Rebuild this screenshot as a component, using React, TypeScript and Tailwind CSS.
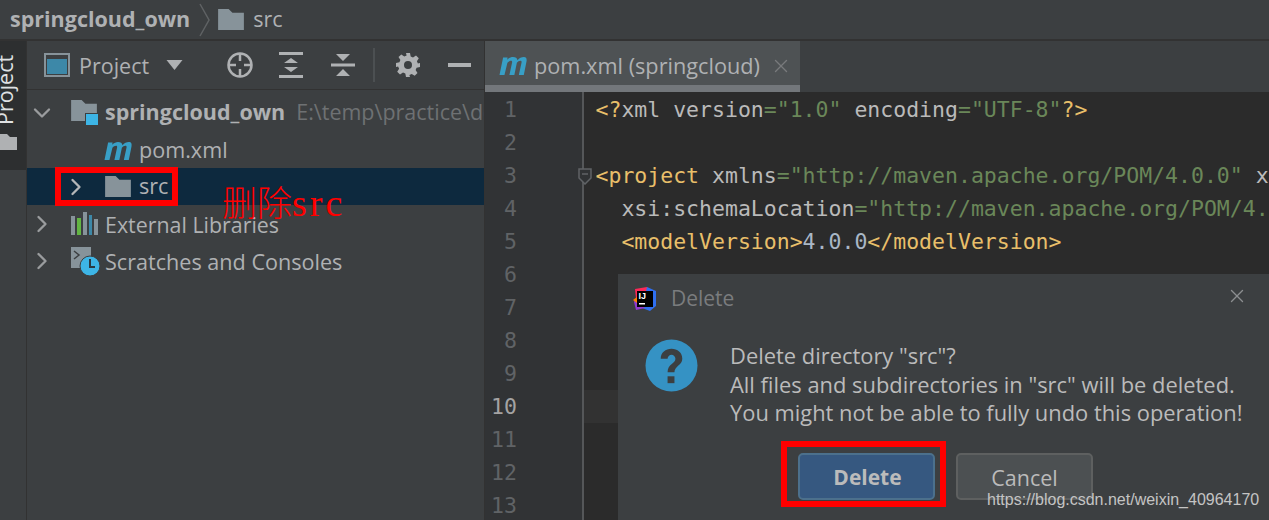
import { ChevronDown, ChevronRight, X } from "lucide-react";

const uiFont = "font-['Open_Sans','Noto_Sans',sans-serif]";

function Folder({ className }: { className?: string }) {
  return (
    <svg viewBox="0 0 27 22" className={`shrink-0 ${className}`}>
      <path d="M0 0h11l4 4h12v18H0z" fill="#87939a" />
    </svg>
  );
}

function MavenIcon({ className }: { className?: string }) {
  return (
    <svg viewBox="0 0 30 20" className={`shrink-0 w-[28px] h-[18px] ${className}`} fill="#389fc6">
      <path d="M0 20L4 .5h5l-.5 2.500C10.500 1 13 0 15 0c3 0 4.500 1 5 3.500C22 1.200 24.500 0 27 0c3 0 3.500 2 3 5l-3 15h-5.500l3-14c.2-1.200-.2-1.800-1.200-1.800-1.500 0-3 1-4 2.300L16.500 20H11l3-14c.2-1.200-.2-1.800-1.200-1.800-1.500 0-3 1-4 2.300L5.500 20z" />
    </svg>
  );
}

function Toolbar() {
  return (
    <div className="h-[49px] shrink-0 flex items-center border-b border-[#323232] pl-[17px]">
      <svg viewBox="0 0 26 24" className="w-[26px] h-[24px]">
        <rect x="1" y="1" width="24" height="22" fill="#3c3f41" stroke="#87939a" strokeWidth="2" />
        <rect x="3" y="6" width="20" height="15" fill="#3d88a8" />
      </svg>
      <span className="ml-[9px] mt-[2px] text-[21.500px] text-[#afb1b3] leading-none w-[87px]">Project</span>
      <svg viewBox="0 0 16 10" className="w-[17px] h-[10px]">
        <path d="M0 0h16L8 10z" fill="#afb1b3" />
      </svg>
      <svg viewBox="0 0 26 26" className="ml-[44px] w-[26px] h-[26px]" fill="none" stroke="#afb1b3" strokeWidth="2.500">
        <circle cx="13" cy="13" r="11.500" />
        <path d="M13 1v8M13 17v8M1 13h8M17 13h8" />
      </svg>
      <svg viewBox="0 0 24 26" className="ml-[26px] w-[24px] h-[26px]" fill="#afb1b3">
        <path d="M0 0h24v3H0zM0 23h24v3H0zM12 6l7 5H5zM12 20l-7-5h14z" />
      </svg>
      <svg viewBox="0 0 24 26" className="ml-[28px] w-[24px] h-[26px]" fill="#afb1b3">
        <path d="M0 11.500h24v3H0zM12 9L5 2h14zM12 17l7 7H5z" />
      </svg>
      <div className="ml-[18px] w-[2px] h-[34px] bg-[#4c5052]" />
      <svg viewBox="0 0 24 24" className="ml-[21px] w-[24px] h-[24px]" fill="#afb1b3">
        <path
          fillRule="evenodd"
          d="M10 0h4l.7 3.400 2.300 1 3-1.900 2.800 2.800-1.900 3 1 2.300L24 10v4l-3.400.7-1 2.300 1.900 3-2.800 2.800-3-1.900-2.300 1L14 24h-4l-.7-3.400-2.300-1-3 1.900-2.800-2.800 1.900-3-1-2.300L0 14v-4l3.400-.7 1-2.300-1.900-3L5.300 1.500l3 1.900 2.300-1zM12 8a4 4 0 1 0 0 8 4 4 0 0 0 0-8z"
        />
      </svg>
      <div className="ml-[28px] w-[23px] h-[4px] bg-[#afb1b3]" />
    </div>
  );
}

function ProjectTree() {
  return (
    <div className={`w-[458px] shrink-0 overflow-hidden bg-[#3c3f41] border-r border-[#323232] ${uiFont}`}>
      <Toolbar />
      <div className="pt-[4px] text-[21.600px] text-[#afb1b3]">
        <div className="h-[37px] flex items-center whitespace-nowrap">
          <ChevronDown className="shrink-0 ml-[1px] w-[28px] h-[28px] text-[#9a9c9e]" strokeWidth={2} />
          <div className="relative shrink-0 ml-[15px] w-[27px] h-[25px]">
            <Folder className="w-[26px] h-[21px]" />
            <div className="absolute right-0 bottom-0 w-[13px] h-[12px] bg-[#3db5e6] border-l border-t border-[#3c3f41]" />
          </div>
          <span className="ml-[7px] font-bold text-[21.500px]">springcloud_own</span>
          <span className="ml-[11px] text-[#6e7173] text-[21.500px]">E:\temp\practice\demo</span>
        </div>
        <div className="h-[37px] flex items-center pl-[77px] pt-[2px]">
          <MavenIcon />
          <span className="ml-[7px]">pom.xml</span>
        </div>
        <div className="h-[37px] flex items-center bg-[#0d293e] pl-[35px]">
          <ChevronRight className="w-[28px] h-[28px] text-[#b4b6b8]" strokeWidth={2} />
          <Folder className="ml-[15px] w-[26px] h-[21px]" />
          <span className="ml-[8px]">src</span>
        </div>
        <div className="h-[37px] flex items-center pl-[1px] pt-[4px]">
          <ChevronRight className="w-[28px] h-[28px] text-[#9a9c9e] -mt-[4px]" strokeWidth={2} />
          <svg viewBox="0 0 27 23" className="ml-[15px] w-[27px] h-[23px] -mt-[4px]">
            <path d="M0 4h4v19H0z" fill="#87939a" />
            <path d="M6 6h4v17H6z" fill="#62b543" />
            <path d="M12 0h4v23h-4z" fill="#87939a" />
            <path d="M18 3h3v20h-3z" fill="#3d88a8" />
            <path d="M23 7h4v16h-4z" fill="#87939a" />
          </svg>
          <span className="ml-[7px] text-[21.400px]">External Libraries</span>
        </div>
        <div className="h-[37px] flex items-center pl-[1px] pt-[4px]">
          <ChevronRight className="w-[28px] h-[28px] text-[#9a9c9e] -mt-[4px]" strokeWidth={2} />
          <svg viewBox="0 0 29 29" className="ml-[15px] w-[29px] h-[29px] -mt-[2px]">
            <path d="M0 0h20v21H0z" fill="#87939a" />
            <path d="M3 4l5 4-5 4" fill="none" stroke="#3c3f41" strokeWidth="1.500" />
            <circle cx="19" cy="19" r="10" fill="#3db5e6" stroke="#3c3f41" strokeWidth="1" />
            <path d="M19 12v8h5" fill="none" stroke="#2b3a42" strokeWidth="2" />
          </svg>
          <span className="ml-[5px]">Scratches and Consoles</span>
        </div>
      </div>
    </div>
  );
}

const numbers = [1, 2, 3, 4, 5, 6, 7, 8, 9, 10, 11, 12, 13];

function CodeLine({ children }: { children?: React.ReactNode }) {
  return <div className="h-[33px] leading-[33px] whitespace-pre pl-[11.500px]">{children}</div>;
}

function Editor() {
  const tag = "text-[#e8bf6a]";
  const str = "text-[#6a8759]";
  return (
    <div className="flex-1 min-w-0 flex flex-col overflow-hidden">
      <div className="h-[51px] shrink-0 bg-[#3c3f41] flex">
        <div className={`relative w-[315px] bg-[#4e5254] flex items-center pt-[7px] pl-[14px] text-[21.700px] text-[#afb1b3] border-b-[7px] border-[#73777b] ${uiFont}`}>
          <MavenIcon className="-mt-[1px]" />
          <span className="ml-[7px] whitespace-nowrap">pom.xml (springcloud)</span>
          <X className="absolute right-[8px] top-[14px] w-[22px] h-[22px] text-[#787a7c]" strokeWidth={1.500} />
        </div>
      </div>
      <div className="flex-1 flex bg-[#2b2b2b] font-['DejaVu_Sans_Mono',monospace] text-[21.500px]">
        <div className="relative w-[99px] shrink-0 bg-[#313335] border-r-2 border-[#555759] pt-[1px] text-right pr-[65px] text-[#606366]">
          {numbers.map((n) => (
            <div key={n} className={`h-[33px] leading-[33px] ${n === 10 ? "text-[#a4a3a3]" : ""}`}>
              {n}
            </div>
          ))}
          <svg viewBox="0 0 14 17" className="absolute left-[93px] top-[76px] w-[14px] h-[17px]" fill="#313335" stroke="#606366" strokeWidth="1.500">
            <path d="M1 1h12v9l-6 6-6-6z" />
            <path d="M4 6h6" />
          </svg>
        </div>
        <div className="flex-1 min-w-0 pt-[1px] text-[#bababa] overflow-hidden">
          <CodeLine>
            <span className={tag}>&lt;?</span>xml version<span className={str}>="1.0"</span> encoding<span className={str}>="UTF-8"</span><span className={tag}>?&gt;</span>
          </CodeLine>
          <CodeLine />
          <CodeLine>
            <span className={tag}>&lt;project</span> xmlns<span className={str}>="http://maven.apache.org/POM/4.0.0"</span> xmlns
          </CodeLine>
          <CodeLine>
            {"  "}xsi:schemaLocation<span className={str}>="http://maven.apache.org/POM/4.0.0"</span>
          </CodeLine>
          <CodeLine>
            {"  "}<span className={tag}>&lt;modelVersion&gt;</span><span className="text-[#a9b7c6]">4.0.0</span><span className={tag}>&lt;/modelVersion&gt;</span>
          </CodeLine>
          <CodeLine />
          <CodeLine />
          <CodeLine />
          <CodeLine />
          <div className="h-[33px] bg-[#323232]" />
        </div>
      </div>
    </div>
  );
}

function IdeaLogo() {
  return (
    <svg viewBox="0 0 24 24" className="w-[24px] h-[24px]">
      <path d="M2 2l12-2 3 8L4 21z" fill="#fe2857" />
      <path d="M14 0l9 4v15l-6 5-8-3z" fill="#2f6ff0" />
      <path d="M2 12L1 15l2 8 9-2z" fill="#9039d0" />
      <path d="M0 13l4-3v6z" fill="#ff8100" />
      <rect x="4" y="4" width="16" height="16" fill="#000" />
      <text x="5.500" y="12" fontSize="9" fontWeight="700" fill="#fff" fontFamily="Liberation Sans">IJ</text>
      <rect x="6" y="16" width="6" height="1.500" fill="#fff" />
    </svg>
  );
}

function DeleteDialog() {
  return (
    <div className={`absolute left-[618px] top-[274px] w-[651px] h-[246px] bg-[#3c3f41] text-[#bbbbbb] ${uiFont}`}>
      <div className="h-[49px] flex items-center pl-[15px] text-[21px]">
        <IdeaLogo />
        <span className="ml-[14px] text-[#7a7c7e]">Delete</span>
        <X className="absolute right-[21px] top-[11px] w-[22px] h-[22px] text-[#8c8e90]" strokeWidth={1.500} />
      </div>
      <div className="flex pl-[27px] pt-[16px]">
        <svg viewBox="0 0 54 54" className="w-[53px] h-[53px] shrink-0">
          <circle cx="27" cy="27" r="26.500" fill="#3592c4" />
          <path d="M16 20c0-6 5-10 11-10s11 4 11 10c0 7-8 7-8 14h-7c0-9 8-9 8-14 0-2-2-4-4-4s-4 2-4 4z" fill="#3c3f41" />
          <rect x="23" y="38" width="7" height="7" fill="#3c3f41" />
        </svg>
        <div className="ml-[32px] mt-[3px] text-[21.900px] leading-[28.500px] whitespace-nowrap">
          <p>Delete directory "src"?</p>
          <p>All files and subdirectories in "src" will be deleted.</p>
          <p>You might not be able to fully undo this operation!</p>
        </div>
      </div>
      <div className="flex pl-[180px] pt-[25px] gap-[21px] text-[21.500px]">
        <button className="w-[137px] h-[47px] pt-[4px] pl-[2px] rounded-[5px] bg-[#365880] border-2 border-[#4c708c] font-bold text-[21px]">Delete</button>
        <button className="w-[137px] h-[47px] pt-[4px] rounded-[5px] bg-[#4c5052] border-2 border-[#5e6060]">Cancel</button>
      </div>
    </div>
  );
}

export default function App() {
  return (
    <div className="relative w-[1269px] h-[520px] overflow-hidden bg-[#3c3f41] flex flex-col">
      <div className={`h-[39px] shrink-0 flex items-center pl-[10px] text-[21.500px] text-[#afb1b3] border-b-2 border-[#323232] box-content ${uiFont}`}>
        <span className="font-bold">springcloud_own</span>
        <svg viewBox="0 0 12 34" className="ml-[9px] w-[12px] h-[34px]" fill="none" stroke="#5f6264" strokeWidth="1.500">
          <path d="M1 1l9 16-9 16" />
        </svg>
        <Folder className="ml-[7px] w-[26px] h-[21px]" />
        <span className="ml-[9px]">src</span>
      </div>
      <div className="flex-1 flex min-h-0">
        <div className="w-[26px] shrink-0 bg-[#3c3f41]">
          <div className="h-[129px] bg-[#2d2f30] relative overflow-hidden">
            <span className={`absolute left-[-8px] top-[84px] -rotate-90 origin-top-left text-[21.500px] text-[#dfe1e3] leading-[26px] ${uiFont}`}>Project</span>
            <svg viewBox="0 0 17 16" className="absolute left-0 top-[93px] w-[17px] h-[16px]">
              <path d="M0 0h7l3 3h7v13H0z" fill="#afb1b3" />
            </svg>
          </div>
        </div>
        <div className="w-[1px] shrink-0 bg-[#323232]" />
        <ProjectTree />
        <Editor />
      </div>

      <DeleteDialog />

      {/* annotations */}
      <div className="absolute left-[55px] top-[167px] w-[123px] h-[39px] border-[6px] border-[#ff0000]" />
      <div className="absolute left-[222px] top-[184px] text-[#ff0000] text-[35px] leading-[38px] font-['Liberation_Serif','Noto_Sans_CJK_SC',serif] font-light">
        删除<span className="text-[38px] tracking-[3px]">src</span>
      </div>
      <div className="absolute left-[781px] top-[441px] w-[165px] h-[66px] border-[6px] border-[#ff0000]" />
      <div className="absolute left-[987px] top-[489px] text-[16px] leading-[22px] text-[#c4c4c4] font-['Liberation_Sans',sans-serif]">https://blog.csdn.net/weixin_40964170</div>
    </div>
  );
}
